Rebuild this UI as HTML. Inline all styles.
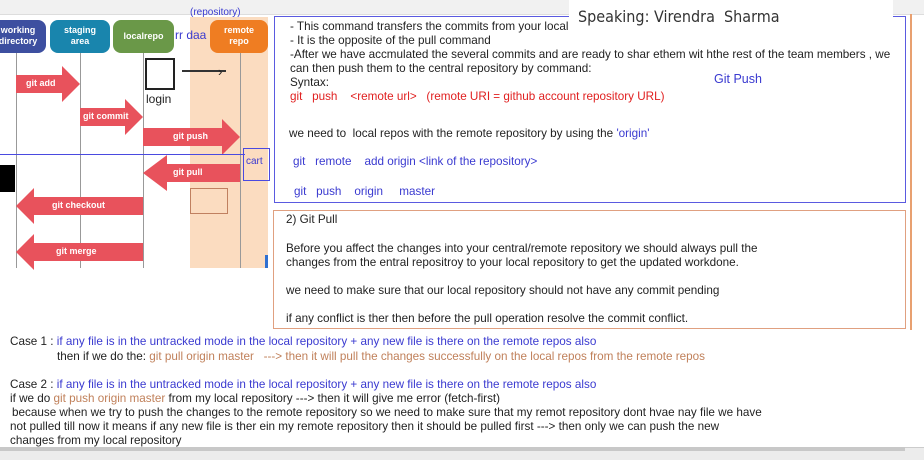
<!DOCTYPE html>
<html><head><meta charset="utf-8"><style>
*{margin:0;padding:0;box-sizing:border-box}
body{width:924px;height:460px;overflow:hidden;background:#fff;position:relative;font-family:"Liberation Sans",Arial,sans-serif;font-size:11.7px;color:#222}
.a{position:absolute;white-space:nowrap}
.tb{left:0;top:0;width:924px;height:15px;background:#f1f1f1;border-bottom:1px solid #ddd}
.vl{position:absolute;width:1px;background:#999;top:52px;height:216px}
.hd{position:absolute;top:20px;height:33px;border-radius:8px;color:#fff;font-size:9px;font-weight:bold;text-align:center;line-height:11px;padding-top:5px}
.ar{position:absolute;height:36px}
.ar .b{position:absolute;top:9px;height:18px;background:#e8525c}
.ar .t{position:absolute;width:0;height:0;border-top:18px solid transparent;border-bottom:18px solid transparent}
.ar span{position:absolute;top:12px;color:#fff;font-size:9px;font-weight:bold;white-space:nowrap}
.bl{color:#3a3ad0}.rd{color:#e02020}.br{color:#c0805a}
</style></head><body>
<div class="a tb"></div>
<div class="a" style="left:190px;top:17px;width:78px;height:251px;background:#fbdcc0"></div>
<div class="vl" style="left:16px"></div><div class="vl" style="left:80px"></div><div class="vl" style="left:143px"></div><div class="vl" style="left:240px"></div>
<div class="hd" style="left:-10px;width:56px;background:#3d4fa0">working<br>directory</div>
<div class="hd" style="left:50px;width:60px;background:#1985ad">staging<br>area</div>
<div class="hd" style="left:113px;width:61px;background:#6a9848;padding-top:11px">localrepo</div>
<div class="hd" style="left:210px;width:58px;background:#ef7d22">remote<br>repo</div>
<div class="a bl" style="left:190px;top:7px;font-size:10px">(repository)</div>
<div class="a bl" style="left:175px;top:28px;font-size:12px">rr daa</div>
<div class="a" style="left:145px;top:58px;width:30px;height:32px;border:2px solid #222"></div>
<div class="a" style="left:146px;top:92px;font-size:12px">login</div>
<div class="a" style="left:182px;top:70px;width:44px;height:2px;background:#333"></div>
<div class="a" style="left:218px;top:64px;font-size:13px">›</div>
<div class="ar" style="left:16px;top:66px;width:64px"><div class="b" style="left:0;width:46px"></div><div class="t" style="left:46px;border-left:18px solid #e8525c"></div><span style="left:10px">git add</span></div>
<div class="ar" style="left:80px;top:99px;width:63px"><div class="b" style="left:0;width:45px"></div><div class="t" style="left:45px;border-left:18px solid #e8525c"></div><span style="left:3px">git commit</span></div>
<div class="ar" style="left:143px;top:119px;width:97px"><div class="b" style="left:0;width:79px"></div><div class="t" style="left:79px;border-left:18px solid #e8525c"></div><span style="left:30px">git push</span></div>
<div class="ar" style="left:143px;top:155px;width:97px"><div class="t" style="left:0;border-right:24px solid #e8525c"></div><div class="b" style="left:24px;width:73px"></div><span style="left:30px">git pull</span></div>
<div class="ar" style="left:16px;top:188px;width:127px"><div class="t" style="left:0;border-right:18px solid #e8525c"></div><div class="b" style="left:18px;width:109px"></div><span style="left:36px">git checkout</span></div>
<div class="ar" style="left:16px;top:234px;width:127px"><div class="t" style="left:0;border-right:18px solid #e8525c"></div><div class="b" style="left:18px;width:109px"></div><span style="left:40px">git merge</span></div>
<div class="a" style="left:0;top:154px;width:245px;height:1px;background:#4a4ae0"></div>
<div class="a" style="left:243px;top:148px;width:27px;height:33px;border:1px solid #4a4ae0;color:#3a3ad0;font-size:10px;padding:7px 0 0 2px">cart</div>
<div class="a" style="left:0;top:165px;width:15px;height:27px;background:#000"></div>
<div class="a" style="left:190px;top:188px;width:38px;height:26px;border:1px solid #c08060"></div>
<div class="a" style="left:265px;top:255px;width:3px;height:13px;background:#3070d0"></div>
<div class="a" style="left:274px;top:16px;width:632px;height:187px;border:1.5px solid #5a5ae0"></div>
<div class="a" style="left:273px;top:210px;width:633px;height:119px;border:1.5px solid #e0a080"></div>
<div class="a" style="left:910px;top:14px;width:2px;height:316px;background:#e8a070"></div>
<div class="a" style="left:290px;top:20px">- This command transfers the commits from your local repository</div>
<div class="a" style="left:290px;top:34px">- It is the opposite of the pull command</div>
<div class="a" style="left:290px;top:48px">-After we have accmulated the several commits and are ready to shar ethem wit hthe rest of the team members , we</div>
<div class="a" style="left:290px;top:62px">can then push them to the central repository by command:</div>
<div class="a" style="left:290px;top:76px">Syntax:</div>
<div class="a bl" style="left:714px;top:72px;font-size:12.5px">Git Push</div>
<div class="a rd" style="left:290px;top:90px">git &nbsp;&nbsp;push &nbsp;&nbsp;&nbsp;&lt;remote url&gt; &nbsp;&nbsp;(remote URI = github account repository URL)</div>
<div class="a" style="left:289px;top:127px">we need to &nbsp;local repos with the remote repository by using the <span class="bl">'origin'</span></div>
<div class="a bl" style="left:293px;top:155px">git &nbsp;&nbsp;remote &nbsp;&nbsp;&nbsp;add origin &lt;link of the repository&gt;</div>
<div class="a bl" style="left:294px;top:185px">git &nbsp;&nbsp;push &nbsp;&nbsp;&nbsp;origin &nbsp;&nbsp;&nbsp;&nbsp;master</div>
<div class="a" style="left:286px;top:213px">2) Git Pull</div>
<div class="a" style="left:286px;top:242px">Before you affect the changes into your central/remote repository we should always pull the</div>
<div class="a" style="left:286px;top:256px">changes from the entral repositroy to your local repository to get the updated workdone.</div>
<div class="a" style="left:286px;top:284px">we need to make sure that our local repository should not have any commit pending</div>
<div class="a" style="left:286px;top:312px">if any conflict is ther then before the pull operation resolve the commit conflict.</div>
<div class="a" style="left:569px;top:0;width:324px;height:34px;background:#fff"></div>
<div class="a" style="left:578px;top:7px;font-size:16px;font-family:'DejaVu Sans Condensed','DejaVu Sans',sans-serif;color:#333">Speaking: Virendra&nbsp; Sharma</div>
<div class="a" style="left:10px;top:335px">Case 1 : <span class="bl">if any file is in the untracked mode in the local repository + any new file is there on the remote repos also</span></div>
<div class="a" style="left:57px;top:350px">then if we do the: <span class="br">git pull origin master &nbsp;&nbsp;---&gt; then it will pull the changes successfully on the local repos from the remote repos</span></div>
<div class="a" style="left:10px;top:378px">Case 2 : <span class="bl">if any file is in the untracked mode in the local repository + any new file is there on the remote repos also</span></div>
<div class="a" style="left:10px;top:392px">if we do <span class="br">git push origin master</span> from my local repository ---&gt; then it will give me error (fetch-first)</div>
<div class="a" style="left:12px;top:406px">because when we try to push the changes to the remote repository so we need to make sure that my remot repository dont hvae nay file we have</div>
<div class="a" style="left:10px;top:420px">not pulled till now it means if any new file is ther ein my remote repository then it should be pulled first ---&gt; then only we can push the new</div>
<div class="a" style="left:10px;top:434px">changes from my local repository</div>
<div class="a" style="left:0;top:447px;width:924px;height:13px;background:#ececec;border-top:1px solid #ccc"></div>
<div class="a" style="left:0;top:447px;width:905px;height:4px;background:#c8c8c8"></div>
</body></html>
